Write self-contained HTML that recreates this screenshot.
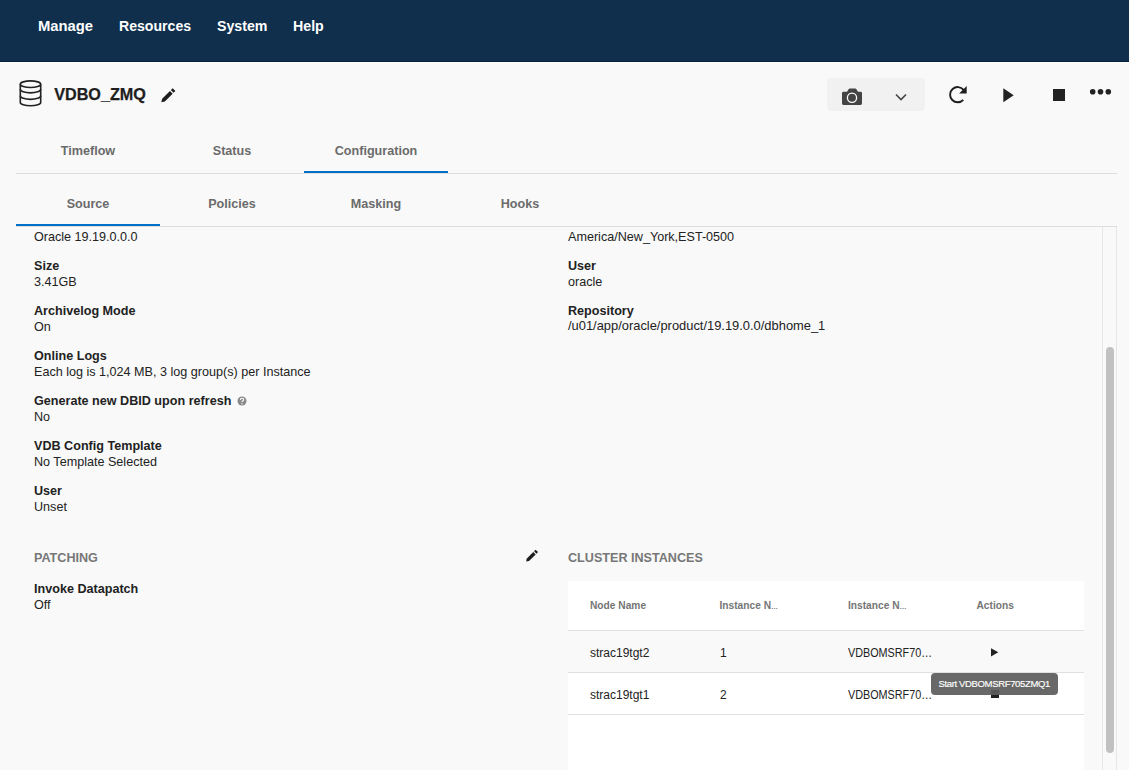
<!DOCTYPE html>
<html>
<head>
<meta charset="utf-8">
<style>
html,body{margin:0;padding:0;}
body{width:1129px;height:770px;overflow:hidden;background:#f9f9f9;font-family:"Liberation Sans",sans-serif;position:relative;color:#222;}
.a{position:absolute;white-space:nowrap;line-height:1;}
.nav{position:absolute;left:0;top:0;width:1129px;height:62px;background:#0f2f4d;}
.nv{color:#fff;font-weight:bold;font-size:14.6px;}
.tab{color:#6b6b6b;font-weight:bold;font-size:12.6px;}
.lbl{font-weight:bold;font-size:12.6px;color:#222;}
.val{font-size:12.6px;color:#222;}
.sec{font-weight:bold;font-size:12.6px;color:#777;}
.th{font-weight:bold;font-size:10.2px;color:#757575;}
.td{font-size:12px;color:#222;}
.line{position:absolute;height:1px;background:#dddddd;}
</style>
</head>
<body>
<div class="nav"></div>
<div class="a" style="left:0;top:61px;width:1129px;height:1px;background:#05223f;"></div>
<div class="a" style="left:0;top:62px;width:1129px;height:1px;background:#fdfdfd;"></div>
<div class="a nv" style="left:38px;top:18.5px;font-size:14.8px;">Manage</div>
<div class="a nv" style="left:119px;top:18.5px;font-size:14.1px;">Resources</div>
<div class="a nv" style="left:217px;top:18.5px;font-size:14.2px;">System</div>
<div class="a nv" style="left:293px;top:18.5px;font-size:14.2px;">Help</div>

<!-- db icon -->
<svg class="a" style="left:18px;top:79px;" width="26" height="29" viewBox="0 0 26 29">
  <g fill="none" stroke="#222" stroke-width="1.6">
    <ellipse cx="12.5" cy="5.2" rx="10.2" ry="3.3"/>
    <path d="M2.3 5.2 V23.4 A10.2 3.4 0 0 0 22.7 23.4 V5.2"/>
    <path d="M2.3 10.3 A10.2 3.6 0 0 0 22.7 10.3"/>
    <path d="M2.3 16.8 A10.2 3.6 0 0 0 22.7 16.8"/>
  </g>
</svg>
<div class="a" style="left:54.2px;top:85.6px;font-size:16.2px;font-weight:bold;color:#1e1e1e;-webkit-text-stroke:0.25px #1e1e1e;">VDBO_ZMQ</div>
<svg class="a" style="left:155px;top:82px;" width="27" height="26" viewBox="0 0 27 26"><g transform="translate(12.7 13.9) rotate(-45)"><path fill="#1e1e1e" d="M-9.1 0 L-5.9 -1.9 H5.1 V1.9 H-5.9 Z M6.4 -1.9 H8.9 V1.9 H6.4 Z"/></g></svg>

<!-- toolbar -->
<div class="a" style="left:827px;top:78px;width:98px;height:33px;background:#f1f1f1;border-radius:4px;"></div>
<svg class="a" style="left:842px;top:88px;" width="21" height="18" viewBox="0 0 21 18">
  <path fill="#444" d="M5 3.8 L6.6 1.2 Q7 0.6 7.7 0.6 H13.3 Q14 0.6 14.4 1.2 L16 3.8 H18.6 Q20 3.8 20 5.2 V15.6 Q20 17 18.6 17 H1.4 Q0 17 0 15.6 V5.2 Q0 3.8 1.4 3.8 Z"/>
  <circle cx="10" cy="9.8" r="4.6" fill="none" stroke="#fff" stroke-width="1.3"/>
</svg>
<svg class="a" style="left:895px;top:92.7px;" width="12" height="9" viewBox="0 0 12 9"><path d="M1 1.5 L6 6.5 L11 1.5" fill="none" stroke="#444" stroke-width="1.6"/></svg>

<svg class="a" style="left:942px;top:80px;" width="30" height="30" viewBox="0 0 30 30"><path d="M21.3 19.8 A7.6 7.6 0 1 1 21.6 9.9" fill="none" stroke="#1e1e1e" stroke-width="1.9"/><path d="M17.1 13.6 L24.7 13.6 L24.7 6 Z" fill="#1e1e1e"/></svg>
<svg class="a" style="left:1003px;top:87.5px;" width="11" height="15" viewBox="0 0 11 15"><path fill="#222" d="M0.3 0.3 L10.7 7.3 L0.3 14.3 Z"/></svg>
<div class="a" style="left:1052.5px;top:88.5px;width:12.8px;height:12.6px;background:#222;"></div>
<svg class="a" style="left:1089px;top:88px;" width="23" height="8" viewBox="0 0 23 8">
  <circle cx="3.7" cy="3.8" r="2.8" fill="#222"/><circle cx="11.5" cy="3.8" r="2.8" fill="#222"/><circle cx="19.3" cy="3.8" r="2.8" fill="#222"/>
</svg>

<!-- tabs -->
<div class="a tab" style="left:16px;top:145px;width:144px;text-align:center;">Timeflow</div>
<div class="a tab" style="left:160px;top:145px;width:144px;text-align:center;">Status</div>
<div class="a tab" style="left:304px;top:145px;width:144px;text-align:center;">Configuration</div>
<div class="line" style="left:16px;top:173px;width:1101px;"></div>
<div class="a" style="left:304px;top:171px;width:144px;height:2px;background:#0070c9;"></div>

<div class="a tab" style="left:16px;top:198px;width:144px;text-align:center;">Source</div>
<div class="a tab" style="left:160px;top:198px;width:144px;text-align:center;">Policies</div>
<div class="a tab" style="left:304px;top:198px;width:144px;text-align:center;">Masking</div>
<div class="a tab" style="left:448px;top:198px;width:144px;text-align:center;">Hooks</div>
<div class="line" style="left:16px;top:226px;width:1101px;"></div>
<div class="a" style="left:16px;top:224px;width:144px;height:2px;background:#0070c9;"></div>

<!-- scrollbar -->
<div class="a" style="left:1102px;top:227px;width:1px;height:543px;background:#e6e6e6;"></div>
<div class="a" style="left:1116px;top:227px;width:1px;height:543px;background:#e6e6e6;"></div>
<div class="a" style="left:1106px;top:347px;width:8px;height:406px;background:#c1c1c1;border-radius:4px;"></div>

<!-- left column -->
<div class="a val" style="left:34px;top:231px;">Oracle 19.19.0.0.0</div>
<div class="a lbl" style="left:34px;top:259.5px;">Size</div>
<div class="a val" style="left:34px;top:275.5px;">3.41GB</div>
<div class="a lbl" style="left:34px;top:304.5px;">Archivelog Mode</div>
<div class="a val" style="left:34px;top:320.5px;">On</div>
<div class="a lbl" style="left:34px;top:349.5px;">Online Logs</div>
<div class="a val" style="left:34px;top:365.5px;">Each log is 1,024 MB, 3 log group(s) per Instance</div>
<div class="a lbl" style="left:34px;top:394.5px;">Generate new DBID upon refresh</div>
<svg class="a" style="left:236.5px;top:396px;" width="10" height="10" viewBox="0 0 10 10"><circle cx="5" cy="5" r="4.5" fill="#8a8a8a"/><path d="M3.4 3.9 Q3.4 2.3 5 2.3 Q6.6 2.3 6.6 3.7 Q6.6 4.5 5.6 5 Q5 5.3 5 6.1" fill="none" stroke="#fff" stroke-width="1.1"/><circle cx="5" cy="7.7" r="0.65" fill="#fff"/></svg>
<div class="a val" style="left:34px;top:410.5px;">No</div>
<div class="a lbl" style="left:34px;top:439.5px;">VDB Config Template</div>
<div class="a val" style="left:34px;top:455.5px;">No Template Selected</div>
<div class="a lbl" style="left:34px;top:484.5px;">User</div>
<div class="a val" style="left:34px;top:500.5px;">Unset</div>

<div class="a sec" style="left:34px;top:552px;">PATCHING</div>
<svg class="a" style="left:520px;top:545px;" width="24" height="24" viewBox="0 0 24 24"><g transform="translate(11.5 11.2) rotate(-45)"><path fill="#1e1e1e" d="M-7.5 0 L-5.2 -1.7 H4.2 V1.7 H-5.2 Z M5.3 -1.7 H7.5 V1.7 H5.3 Z"/></g></svg>
<div class="a lbl" style="left:34px;top:582.5px;">Invoke Datapatch</div>
<div class="a val" style="left:34px;top:598.5px;">Off</div>

<!-- right column -->
<div class="a val" style="left:568px;top:231px;">America/New_York,EST-0500</div>
<div class="a lbl" style="left:568px;top:259.5px;">User</div>
<div class="a val" style="left:568px;top:275.5px;">oracle</div>
<div class="a lbl" style="left:568px;top:304.5px;">Repository</div>
<div class="a val" style="left:568px;top:320.3px;font-size:12.9px;">/u01/app/oracle/product/19.19.0.0/dbhome_1</div>

<div class="a sec" style="left:568px;top:552px;">CLUSTER INSTANCES</div>

<!-- table -->
<div class="a" style="left:568px;top:581px;width:516px;height:189px;background:#fff;"></div>
<div class="line" style="left:568px;top:630px;width:516px;background:#e0e0e0;"></div>
<div class="a" style="left:568px;top:631px;width:516px;height:41px;background:#f9f9f9;"></div>
<div class="line" style="left:568px;top:672px;width:516px;background:#e0e0e0;"></div>
<div class="line" style="left:568px;top:714px;width:516px;background:#e0e0e0;"></div>

<div class="a th" style="left:590px;top:600.7px;">Node Name</div>
<div class="a th" style="left:719.5px;top:600.7px;">Instance N<span style="font-size:7px">…</span></div>
<div class="a th" style="left:848px;top:600.7px;">Instance N<span style="font-size:7px">…</span></div>
<div class="a th" style="left:976.5px;top:600.7px;">Actions</div>

<div class="a td" style="left:590px;top:647px;">strac19tgt2</div>
<div class="a td" style="left:720px;top:647px;">1</div>
<div class="a td" style="left:848px;top:647px;"><span style="display:inline-block;transform:scaleX(0.9);transform-origin:0 0;">VDBOMSRF70…</span></div>
<svg class="a" style="left:991px;top:647.5px;" width="8" height="9" viewBox="0 0 8 9"><path fill="#222" d="M0 0.2 L7.3 4.3 L0 8.5 Z"/></svg>

<div class="a td" style="left:590px;top:689px;">strac19tgt1</div>
<div class="a td" style="left:720px;top:689px;">2</div>
<div class="a td" style="left:848px;top:689px;"><span style="display:inline-block;transform:scaleX(0.9);transform-origin:0 0;">VDBOMSRF70…</span></div>
<div class="a" style="left:991px;top:690px;width:8px;height:8px;background:#222;"></div>

<!-- tooltip -->
<div class="a" style="left:931px;top:673px;width:127px;height:21.5px;background:rgba(92,92,92,0.93);border-radius:4px;"></div>
<div class="a" style="left:938.5px;top:678.8px;font-size:9.5px;color:#fff;letter-spacing:-0.35px;-webkit-text-stroke:0.15px #fff;">Start VDBOMSRF705ZMQ1</div>
</body>
</html>
